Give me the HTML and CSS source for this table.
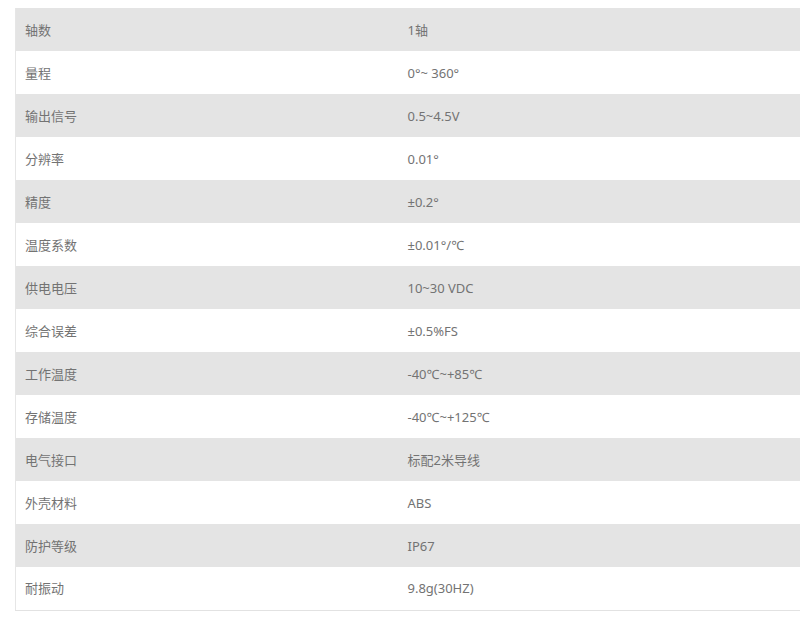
FILE: index.html
```html
<!DOCTYPE html>
<html lang="zh">
<head>
<meta charset="utf-8">
<link rel="stylesheet" href="styles.css">
</head>
<body>
<div class="page">
  <table class="spec">
    <colgroup><col class="c1"><col class="c2"></colgroup>
    <tbody>
      <tr><td>轴数</td><td>1轴</td></tr>
      <tr><td>量程</td><td>0°~ 360°</td></tr>
      <tr><td>输出信号</td><td>0.5~4.5V</td></tr>
      <tr><td>分辨率</td><td>0.01°</td></tr>
      <tr><td>精度</td><td>±0.2°</td></tr>
      <tr><td>温度系数</td><td>±0.01°/℃</td></tr>
      <tr><td>供电电压</td><td>10~30 VDC</td></tr>
      <tr><td>综合误差</td><td>±0.5%FS</td></tr>
      <tr><td>工作温度</td><td>-40℃~+85℃</td></tr>
      <tr><td>存储温度</td><td>-40℃~+125℃</td></tr>
      <tr><td>电气接口</td><td>标配2米导线</td></tr>
      <tr><td>外壳材料</td><td>ABS</td></tr>
      <tr><td>防护等级</td><td>IP67</td></tr>
      <tr><td>耐振动</td><td>9.8g(30HZ)</td></tr>
    </tbody>
  </table>
</div>
</body>
</html>
```
FILE: styles.css
```css
html, body {
  margin: 0;
  padding: 0;
  background: #fff;
}
.page {
  width: 800px;
  height: 619px;
  overflow: hidden;
  padding: 8px 0 0 15px;
  box-sizing: border-box;
}
.spec {
  width: 820px;
  table-layout: fixed;
  border-collapse: collapse;
  font-family: "Noto Sans", "Noto Sans CJK SC", sans-serif;
  font-size: 13px;
  color: #737373;
  border-left: 1px solid #e6e6e6;
  border-bottom: 1px solid #e2e2e2;
}
.c1 {
  width: 383px;
}
.spec td {
  height: 43px;
  padding: 0 0 0 9px;
  box-sizing: border-box;
  vertical-align: middle;
  line-height: 20px;
}
.spec tr:nth-child(odd) td {
  background: #e4e4e4;
}
.spec tr:nth-child(even) td {
  background: #fff;
}
```
